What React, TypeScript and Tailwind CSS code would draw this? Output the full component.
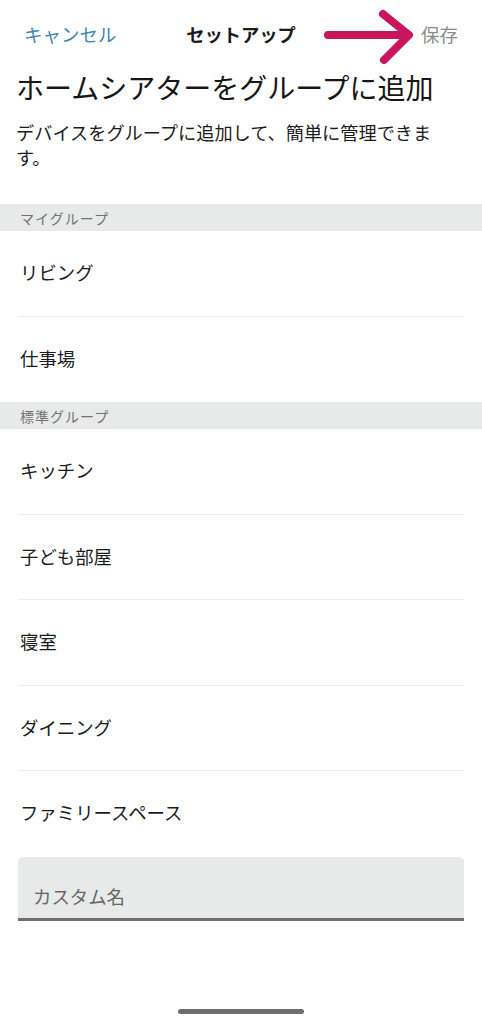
import React from "react";

const font = { fontFamily: '"Noto Sans CJK JP", "Noto Sans", sans-serif' };

function SectionHeader({ label }: { label: string }) {
  return (
    <div className="h-[27px] bg-[#e8e9e9] flex items-center pl-[20px] text-[14px] tracking-[1px] text-[#727272] leading-none">
      {label}
    </div>
  );
}

function Row({ label, last }: { label: string; last?: boolean }) {
  return (
    <div className="mx-[18px] h-[85.5px] flex items-center relative">
      <span className="pl-[2px] pb-[3px] text-[18.4px] text-[#1c1c1c] leading-none">{label}</span>
      {!last && <div className="absolute left-0 right-0 bottom-0 h-px bg-[#ececec]" />}
    </div>
  );
}

export default function App() {
  return (
    <div className="relative w-[482px] h-[1024px] bg-white overflow-hidden" style={font}>
      <div className="h-[68px] grid grid-cols-[1fr_auto_1fr] items-center px-[24px]">
        <span className="text-[18.5px] text-[#4285b8] leading-none">キャンセル</span>
        <span className="text-[18.3px] font-bold text-[#1a1a1a] leading-none">セットアップ</span>
        <span className="justify-self-end text-[18.5px] text-[#8c8c8c] leading-none">保存</span>
      </div>
      <h1 className="pl-[16px] text-[28px] leading-[38px] text-[#161616] font-normal">
        ホームシアターをグループに追加
      </h1>
      <p className="mt-[14px] pl-[16px] pr-[28px] text-[18.2px] leading-[25px] text-[#1c1c1c]">
        デバイスをグループに追加して、簡単に管理できます。
      </p>
      <div className="mt-[34px]">
        <SectionHeader label="マイグループ" />
        <Row label="リビング" />
        <Row label="仕事場" last />
        <SectionHeader label="標準グループ" />
        <Row label="キッチン" />
        <Row label="子ども部屋" />
        <Row label="寝室" />
        <Row label="ダイニング" />
        <Row label="ファミリースペース" last />
        <div className="mx-[18px] h-[64px] bg-[#e8e9e9] rounded-t-[5px] border-b-[3px] border-[#6f6f72] flex items-center pl-[15px] pt-[18px]">
          <span className="text-[18.4px] text-[#666666] leading-none">カスタム名</span>
        </div>
      </div>
      <div className="absolute bottom-[10px] left-[178px] w-[126px] h-[5px] rounded-full bg-[#6e6e6e]" />
      <svg
        className="absolute left-0 top-0"
        width="482"
        height="80"
        viewBox="0 0 482 80"
        fill="none"
      >
        <path
          d="M328 35 L408 35 M383 14 L409 35 L384 60"
          stroke="#c8155e"
          strokeWidth="8"
          strokeLinecap="round"
          strokeLinejoin="round"
        />
      </svg>
    </div>
  );
}
